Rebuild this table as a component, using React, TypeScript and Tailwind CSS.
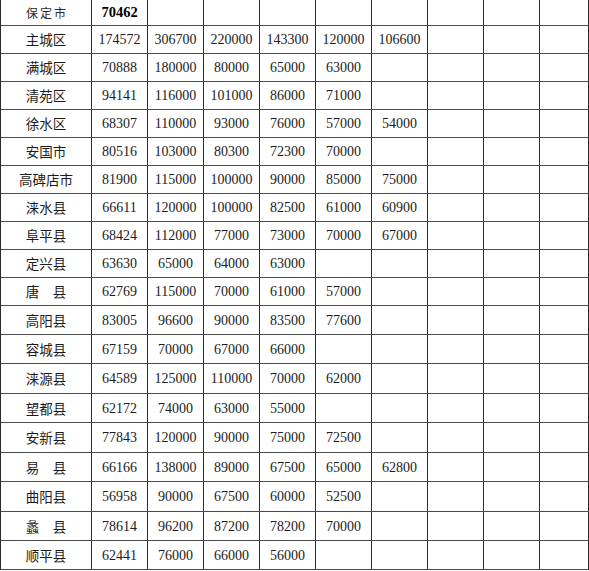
import React from 'react';

// 各县市数据（第一列为基准值，其余为各档数值）
const ROWS: { name: string; values: string[]; h: string }[] = [
  { name: '主城区', values: ['174572', '306700', '220000', '143300', '120000', '106600'], h: 'h-[28px]' },
  { name: '满城区', values: ['70888', '180000', '80000', '65000', '63000'], h: 'h-[28px]' },
  { name: '清苑区', values: ['94141', '116000', '101000', '86000', '71000'], h: 'h-[28px]' },
  { name: '徐水区', values: ['68307', '110000', '93000', '76000', '57000', '54000'], h: 'h-[28px]' },
  { name: '安国市', values: ['80516', '103000', '80300', '72300', '70000'], h: 'h-[28px]' },
  { name: '高碑店市', values: ['81900', '115000', '100000', '90000', '85000', '75000'], h: 'h-[28px]' },
  { name: '涞水县', values: ['66611', '120000', '100000', '82500', '61000', '60900'], h: 'h-[28px]' },
  { name: '阜平县', values: ['68424', '112000', '77000', '73000', '70000', '67000'], h: 'h-[28px]' },
  { name: '定兴县', values: ['63630', '65000', '64000', '63000'], h: 'h-[28px]' },
  { name: '唐　县', values: ['62769', '115000', '70000', '61000', '57000'], h: 'h-[28px]' },
  { name: '高阳县', values: ['83005', '96600', '90000', '83500', '77600'], h: 'h-[29px]' },
  { name: '容城县', values: ['67159', '70000', '67000', '66000'], h: 'h-[29px]' },
  { name: '涞源县', values: ['64589', '125000', '110000', '70000', '62000'], h: 'h-[30px]' },
  { name: '望都县', values: ['62172', '74000', '63000', '55000'], h: 'h-[29px]' },
  { name: '安新县', values: ['77843', '120000', '90000', '75000', '72500'], h: 'h-[30px]' },
  { name: '易　县', values: ['66166', '138000', '89000', '67500', '65000', '62800'], h: 'h-[29px]' },
  { name: '曲阳县', values: ['56958', '90000', '67500', '60000', '52500'], h: 'h-[30px]' },
  { name: '蠡　县', values: ['78614', '96200', '87200', '78200', '70000'], h: 'h-[29px]' },
  { name: '顺平县', values: ['62441', '76000', '66000', '56000'], h: 'h-[29px]' },
];

const VALUE_COLS = 9;

const NUM_FONT = "font-['Liberation_Serif','Times_New_Roman',serif]";
const CJK_FONT = "font-['Noto_Sans_CJK_SC','Noto_Sans_CJK_JP',sans-serif]";

function Cell({ children, last }: { children?: React.ReactNode; last?: boolean }) {
  return (
    <div
      className={`${last ? 'w-[49px]' : 'w-[56px]'} flex h-full shrink-0 items-center justify-center border-r border-[#2b2b2b] text-[14px] text-[#1c1c1c] ${NUM_FONT}`}
    >
      {children}
    </div>
  );
}

export default function App() {
  return (
    <div className="h-[571px] w-[589px] bg-white">
      <div className="flex w-[589px] flex-col border-l border-[#2b2b2b]">
        {/* 表头：保定市 */}
        <div className="flex h-[26px] border-b border-[#4a4a4a]">
          <div
            className={`flex h-full w-[91px] shrink-0 items-center justify-center border-r border-[#2b2b2b] pl-[2px] text-[12px] tracking-[2px] text-[#2a2a2a] ${CJK_FONT}`}
          >
            保定市
          </div>
          <Cell>
            <span className="text-[14.5px] font-bold text-black">70462</span>
          </Cell>
          {[...Array(VALUE_COLS - 1)].map((_, i) => (
            <Cell key={i} last={i === VALUE_COLS - 2} />
          ))}
        </div>

        {ROWS.map((row) => (
          <div key={row.name} className={`flex ${row.h} border-b border-[#4a4a4a]`}>
            <div
              className={`flex h-full w-[91px] shrink-0 items-center justify-center border-r border-[#2b2b2b] text-[13.5px] text-[#1c1c1c] ${CJK_FONT}`}
            >
              {row.name}
            </div>
            {[...Array(VALUE_COLS)].map((_, i) => (
              <Cell key={i} last={i === VALUE_COLS - 1}>
                {row.values[i]}
              </Cell>
            ))}
          </div>
        ))}
      </div>
    </div>
  );
}
